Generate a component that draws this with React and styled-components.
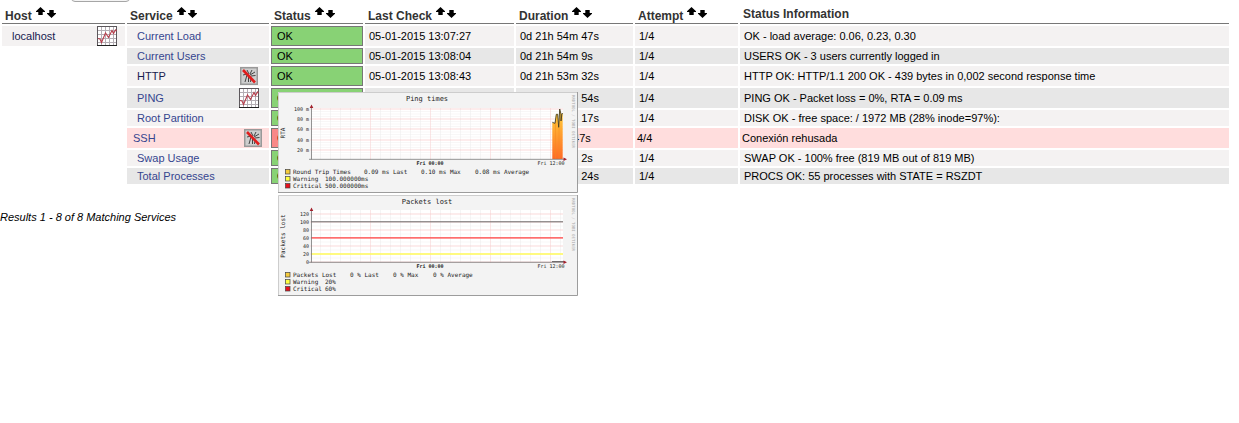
import React from "react";
import styled, { createGlobalStyle, css } from "styled-components";

const GlobalStyle = createGlobalStyle`
  body {
    margin: 0;
    background: #fff;
    color: #000;
    font-family: Arial, "Liberation Sans", Helvetica, sans-serif;
    font-size: 11px;
    line-height: 12px;
  }
`;

const Page = styled.main`
  box-sizing: border-box;
  min-height: 100vh;
  padding-right: 8px;
`;

const FilterBar = styled.form`
  display: flex;
  align-items: flex-end;
  height: 2px;
  padding-left: 71px;
  overflow: hidden;
`;

const FilterButton = styled.button`
  flex: none;
  width: 59px;
  height: 20px;
  border: 1px solid #a6a6a6;
  border-radius: 4px;
  background: #f4f4f4;
`;

const StatusTable = styled.table`
  width: 100%;
  table-layout: fixed;
  border-collapse: separate;
  border-spacing: 2px;
`;

const Col = styled.col`
  width: ${(p) => p.$width};
`;

const HeadCell = styled.th`
  height: 19px;
  padding: 0;
  border-bottom: 1px solid #777;
  vertical-align: top;
`;

const HeadContent = styled.div`
  display: flex;
  align-items: flex-start;
  padding: ${(p) => (p.$plain ? "3px" : "5px")} 3px 0;
  color: #333;
  font-size: 12px;
  font-weight: bold;
  line-height: 14px;
  white-space: nowrap;
`;

const SortLinks = styled.span`
  display: flex;
  gap: 2px;
  margin: -2px 0 0 4px;
`;

const SortLink = styled.a`
  display: flex;
  padding-top: ${(p) => (p.$down ? "3px" : "0")};
  color: #000;
`;

const tones = {
  even: "#f4f2f2",
  odd: "#e7e7e7",
  critical: "#ffdddd",
};

const Cell = styled.td`
  height: ${(p) => (p.$tall ? "20px" : "16px")};
  padding: 0 ${(p) => (p.$tone === "critical" ? "2px" : "4px")};
  background: ${(p) => tones[p.$tone]};
  white-space: nowrap;
`;

const EmptyCell = styled.td`
  padding: 0;
`;

const NameCell = styled(Cell)`
  padding: 0 ${(p) => (p.$tone === "critical" ? "6px" : "10px")};
`;

const HostCell = styled(NameCell)`
  padding-right: 8px;
`;

const NameContent = styled.div`
  display: flex;
  align-items: center;
  justify-content: space-between;

  a {
    display: flex;
  }
`;

const NameLink = styled.a`
  color: ${(p) => (p.$dark ? "#17204f" : "#35458f")};
  text-decoration: none;
`;

const StateCell = styled.td`
  position: relative;
  box-sizing: border-box;
  height: ${(p) => (p.$tall ? "20px" : "16px")};
  padding: 0 5px;
  border: 1px solid #777;
  background: ${(p) => (p.$critical ? "#f88888" : "#88d275")};
`;

const GraphPopup = styled.div`
  position: absolute;
  z-index: 2;
  top: 3px;
  left: 6px;
  display: flex;
  flex-direction: column;
  gap: 2px;

  svg {
    display: block;
  }
`;

const chartText = css`
  font-family: "DejaVu Sans Mono", monospace;
  white-space: pre;
`;

const ChartText = styled.text`
  ${chartText}
  font-size: ${(p) => p.$size || 6}px;
  font-weight: ${(p) => (p.$bold ? "bold" : "normal")};
  fill: ${(p) => p.$fill || "#222"};
`;

const Results = styled.p`
  margin: 25px 0 0;
  font-style: italic;
`;

function Arrow({ down }) {
  return (
    <svg width="9" height="8" viewBox="0 0 9 8" aria-hidden="true">
      <path
        d={down ? "M2.300 0h4.400v3H9v.8L4.500 8 0 3.800V3h2.300z" : "M4.500 0L9 4.200V5H6.700v3H2.300V5H0v-.8z"}
        fill="currentColor"
      />
    </svg>
  );
}

function SortHeader({ label }) {
  return (
    <HeadCell scope="col">
      <HeadContent>
        {label}
        <SortLinks>
          <SortLink href="#asc" aria-label={`Sort by ${label} ascending`}>
            <Arrow />
          </SortLink>
          <SortLink href="#desc" $down aria-label={`Sort by ${label} descending`}>
            <Arrow down />
          </SortLink>
        </SortLinks>
      </HeadContent>
    </HeadCell>
  );
}

function GraphIcon() {
  return (
    <svg width="20" height="20" viewBox="0 0 20 20" aria-hidden="true">
      <path d="M0 0h20v20H0z" fill="#fff" />
      <path
        d="M4.500 0v20M8.500 0v20M12.500 0v20M16.500 0v20M0 4.500h20M0 8.500h20M0 12.500h20M0 16.500h20"
        stroke="#b4aeb4"
        fill="none"
      />
      <path d="M.5 0v19.500M0 .5h20M19.500 0v20" stroke="#5c585c" fill="none" />
      <path d="M0 19.500h20" stroke="#222" fill="none" />
      <path
        d="M1 12.500l2 .5 1.500 3.500 4-9.500 3 4.500 3.500-7 1.500 3 2-3.500 1 1"
        stroke="#b8404e"
        strokeWidth="1.100"
        fill="none"
      />
    </svg>
  );
}

function DisabledIcon() {
  return (
    <svg width="20" height="20" viewBox="0 0 20 20" aria-hidden="true">
      <path d="M1 1h18v18H1z" fill="#999" />
      <path d="M2.500 2.500h15v15h-15z" fill="#cecece" />
      <path
        d="M4 9l4-1M8 4l2 4M13 4l-2 4M16 6l-5 3M16.500 9.500L12 10M8 9l-2 7M9.500 11v5M12 12l-.5 4"
        stroke="#444"
        fill="none"
      />
      <path d="M4 4l12 12.500" stroke="#e11d1d" strokeWidth="2.600" />
    </svg>
  );
}

const icons = { graph: GraphIcon, disabled: DisabledIcon };

function IconLink({ kind }) {
  const Icon = icons[kind];
  return (
    <a
      href={`#${kind}`}
      aria-label={kind === "graph" ? "Performance graph" : "Active checks disabled"}
    >
      <Icon />
    </a>
  );
}

const hours = Array.from({ length: 25 }, (_, i) => 42.5 + i * 10);

function Chart({ title, axis, top, ticks, minor, legend, children }) {
  return (
    <svg width="300" height="101" viewBox="0 0 300 101" role="img" aria-label={title}>
      <path d="M0 0h300v101H0z" fill="#f3f3f3" />
      <path d="M.5 101V.5H300" stroke="#cdcdcd" fill="none" />
      <path d="M299.500 0v100.500H0" stroke="#9c9c9c" fill="none" />
      <path d={`M33 ${top}h252V67H33z`} fill="#fff" />
      {minor.map((y) => (
        <path key={y} d={`M33 ${y}h252`} stroke="#f0eeee" strokeWidth=".5" />
      ))}
      {hours.map((x, i) => (
        <path
          key={x}
          d={`M${x} ${top}v${68 - top}`}
          stroke={i % 6 === 5 ? "#f7d5d5" : "#efefef"}
          strokeWidth=".6"
        />
      ))}
      {ticks.map(([label, y]) => (
        <g key={label}>
          <path d={`M32 ${y}h253`} stroke="#f8c9c9" strokeWidth=".7" />
          <ChartText x="31" y={y + 2} $size={5} textAnchor="end">
            {label}
          </ChartText>
        </g>
      ))}
      {children}
      <path d="M33.500 14v53.500M31 67.300h255" stroke="#777" strokeWidth=".8" fill="none" />
      <path d="M33.500 12.500l1.800 3.500h-3.600zM289 67.200l-3.500-1.800v3.600z" fill="#a3202c" />
      <ChartText x="149" y="9" $size={7} textAnchor="middle">
        {title}
      </ChartText>
      <ChartText $size={6} textAnchor="middle" transform="translate(7 41) rotate(-90)">
        {axis}
      </ChartText>
      <ChartText $size={4} $fill="#aaa" transform="translate(294 3) rotate(90)">
        RRDTOOL / TOBI OETIKER
      </ChartText>
      <ChartText x="152" y="73" $size={5} $bold textAnchor="middle">
        Fri 00:00
      </ChartText>
      <ChartText x="273" y="73" $size={5} textAnchor="middle">
        Fri 12:00
      </ChartText>
      {legend.map(({ color, parts }, i) => (
        <g key={color}>
          <rect
            x="7.500"
            y={77.5 + i * 7}
            width="4.500"
            height="4.500"
            fill={color}
            stroke="#444"
            strokeWidth=".7"
          />
          {parts.map(([x, text]) => (
            <ChartText key={x} x={x} y={82 + i * 7}>
              {text}
            </ChartText>
          ))}
        </g>
      ))}
    </svg>
  );
}

function PingChart() {
  return (
    <Chart
      title="Ping times"
      axis="RTA"
      top={16}
      ticks={[
        ["100 m", 17],
        ["80 m", 27],
        ["60 m", 37],
        ["40 m", 48],
        ["20 m", 58],
      ]}
      minor={[19.5, 22, 24.5, 29.5, 32, 34.5, 40, 42.5, 45, 50.5, 53, 55.5, 60.5, 63, 65]}
      legend={[
        {
          color: "#f5cb3c",
          parts: [
            [15, "Round Trip Times"],
            [86, "0.09 ms Last"],
            [143, "0.10 ms Max"],
            [197, "0.08 ms Average"],
          ],
        },
        { color: "#ffff42", parts: [[15, "Warning"], [47, "100.000000ms"]] },
        { color: "#e8101c", parts: [[15, "Critical"], [47, "500.000000ms"]] },
      ]}
    >
      <defs>
        <linearGradient id="rta" x1="0" y1="0" x2="0" y2="1">
          <stop offset="0" stopColor="#ffd43a" />
          <stop offset="1" stopColor="#ff6a25" />
        </linearGradient>
      </defs>
      <path
        d="M274.300 67V31h2.700l1.300-9h1.400l1 13 1-18 1.300 5 1.700-.5V67z"
        fill="url(#rta)"
      />
      <path d="M277.500 28v39M281 36v31" stroke="#f08a20" strokeWidth=".5" />
      <path
        d="M274.300 30.300l2.700 1 1.300-9h1.400l1 13 1-18.300 1.300 5v7l1-7.500h.7"
        stroke="#443c24"
        strokeWidth=".9"
        fill="none"
      />
    </Chart>
  );
}

function LossChart() {
  return (
    <Chart
      title="Packets lost"
      axis="Packets lost"
      top={15}
      ticks={[
        ["120", 19],
        ["100", 27],
        ["80", 35],
        ["60", 43],
        ["40", 51],
        ["20", 59],
        ["0", 67],
      ]}
      minor={[23, 31, 39, 47, 55, 63]}
      legend={[
        {
          color: "#f5cb3c",
          parts: [
            [15, "Packets Lost"],
            [72, "0 % Last"],
            [115, "0 % Max"],
            [155, "0 % Average"],
          ],
        },
        { color: "#ffff42", parts: [[15, "Warning"], [47, "20%"]] },
        { color: "#e8101c", parts: [[15, "Critical"], [47, "60%"]] },
      ]}
    >
      <path d="M33 26.800h252" stroke="#6a6a6a" />
      <path d="M33 42.900h252" stroke="#ff4545" strokeWidth="1.200" />
      <path d="M33 59h252" stroke="#ffff5c" strokeWidth="1.400" />
      <path d="M274 66.500h12" stroke="#333" strokeWidth=".7" />
    </Chart>
  );
}

const services = [
  { name: "Current Load", tall: true, check: "05-01-2015 13:07:27", duration: "0d 21h 54m 47s", info: "OK - load average: 0.06, 0.23, 0.30" },
  { name: "Current Users", check: "05-01-2015 13:08:04", duration: "0d 21h 54m 9s", info: "USERS OK - 3 users currently logged in" },
  { name: "HTTP", dark: true, tall: true, icon: "disabled", check: "05-01-2015 13:08:43", duration: "0d 21h 53m 32s", info: "HTTP OK: HTTP/1.1 200 OK - 439 bytes in 0,002 second response time" },
  { name: "PING", tall: true, icon: "graph", popup: true, check: "05-01-2015 13:09:21", duration: "0d 21h 52m 54s", info: "PING OK - Packet loss = 0%, RTA = 0.09 ms" },
  { name: "Root Partition", check: "05-01-2015 13:09:58", duration: "0d 21h 52m 17s", info: "DISK OK - free space: / 1972 MB (28% inode=97%):" },
  { name: "SSH", tall: true, icon: "disabled", critical: true, check: "05-01-2015 13:07:28", duration: "0d 0h 14m 47s", attempt: "4/4", info: "Conexión rehusada" },
  { name: "Swap Usage", check: "05-01-2015 13:08:13", duration: "0d 21h 51m 2s", info: "SWAP OK - 100% free (819 MB out of 819 MB)" },
  { name: "Total Processes", check: "05-01-2015 13:08:51", duration: "0d 21h 50m 24s", info: "PROCS OK: 55 processes with STATE = RSZDT" },
];

function ServiceRow({ service, index }) {
  const { name, dark, tall, icon, popup, critical, check, duration, attempt = "1/4", info } = service;
  const tone = critical ? "critical" : index % 2 ? "odd" : "even";
  const look = { $tone: tone, $tall: tall };
  return (
    <tr>
      {index === 0 ? (
        <HostCell {...look}>
          <NameContent>
            <NameLink href="#localhost" $dark>
              localhost
            </NameLink>
            <IconLink kind="graph" />
          </NameContent>
        </HostCell>
      ) : (
        <EmptyCell />
      )}
      <NameCell {...look}>
        <NameContent>
          <NameLink href="#service" $dark={dark}>
            {name}
          </NameLink>
          {icon && <IconLink kind={icon} />}
        </NameContent>
      </NameCell>
      <StateCell $tall={tall} $critical={critical}>
        {critical ? "CRITICAL" : "OK"}
        {popup && (
          <GraphPopup>
            <PingChart />
            <LossChart />
          </GraphPopup>
        )}
      </StateCell>
      <Cell {...look}>{check}</Cell>
      <Cell {...look}>{duration}</Cell>
      <Cell {...look}>{attempt}</Cell>
      <Cell {...look}>{info}</Cell>
    </tr>
  );
}

const columns = ["Host", "Service", "Status", "Last Check", "Duration", "Attempt"];
const columnWidths = ["123px", "142px", "92px", "149px", "117px", "103px", "auto"];

export default function App() {
  return (
    <Page>
      <GlobalStyle />
      <FilterBar>
        <FilterButton type="button" aria-label="Filter" />
      </FilterBar>
      <StatusTable>
        <colgroup>
          {columnWidths.map((width) => (
            <Col key={width} $width={width} />
          ))}
        </colgroup>
        <thead>
          <tr>
            {columns.map((label) => (
              <SortHeader key={label} label={label} />
            ))}
            <HeadCell scope="col">
              <HeadContent $plain>Status Information</HeadContent>
            </HeadCell>
          </tr>
        </thead>
        <tbody>
          {services.map((service, index) => (
            <ServiceRow key={service.name} service={service} index={index} />
          ))}
        </tbody>
      </StatusTable>
      <Results>Results 1 - 8 of 8 Matching Services</Results>
    </Page>
  );
}
